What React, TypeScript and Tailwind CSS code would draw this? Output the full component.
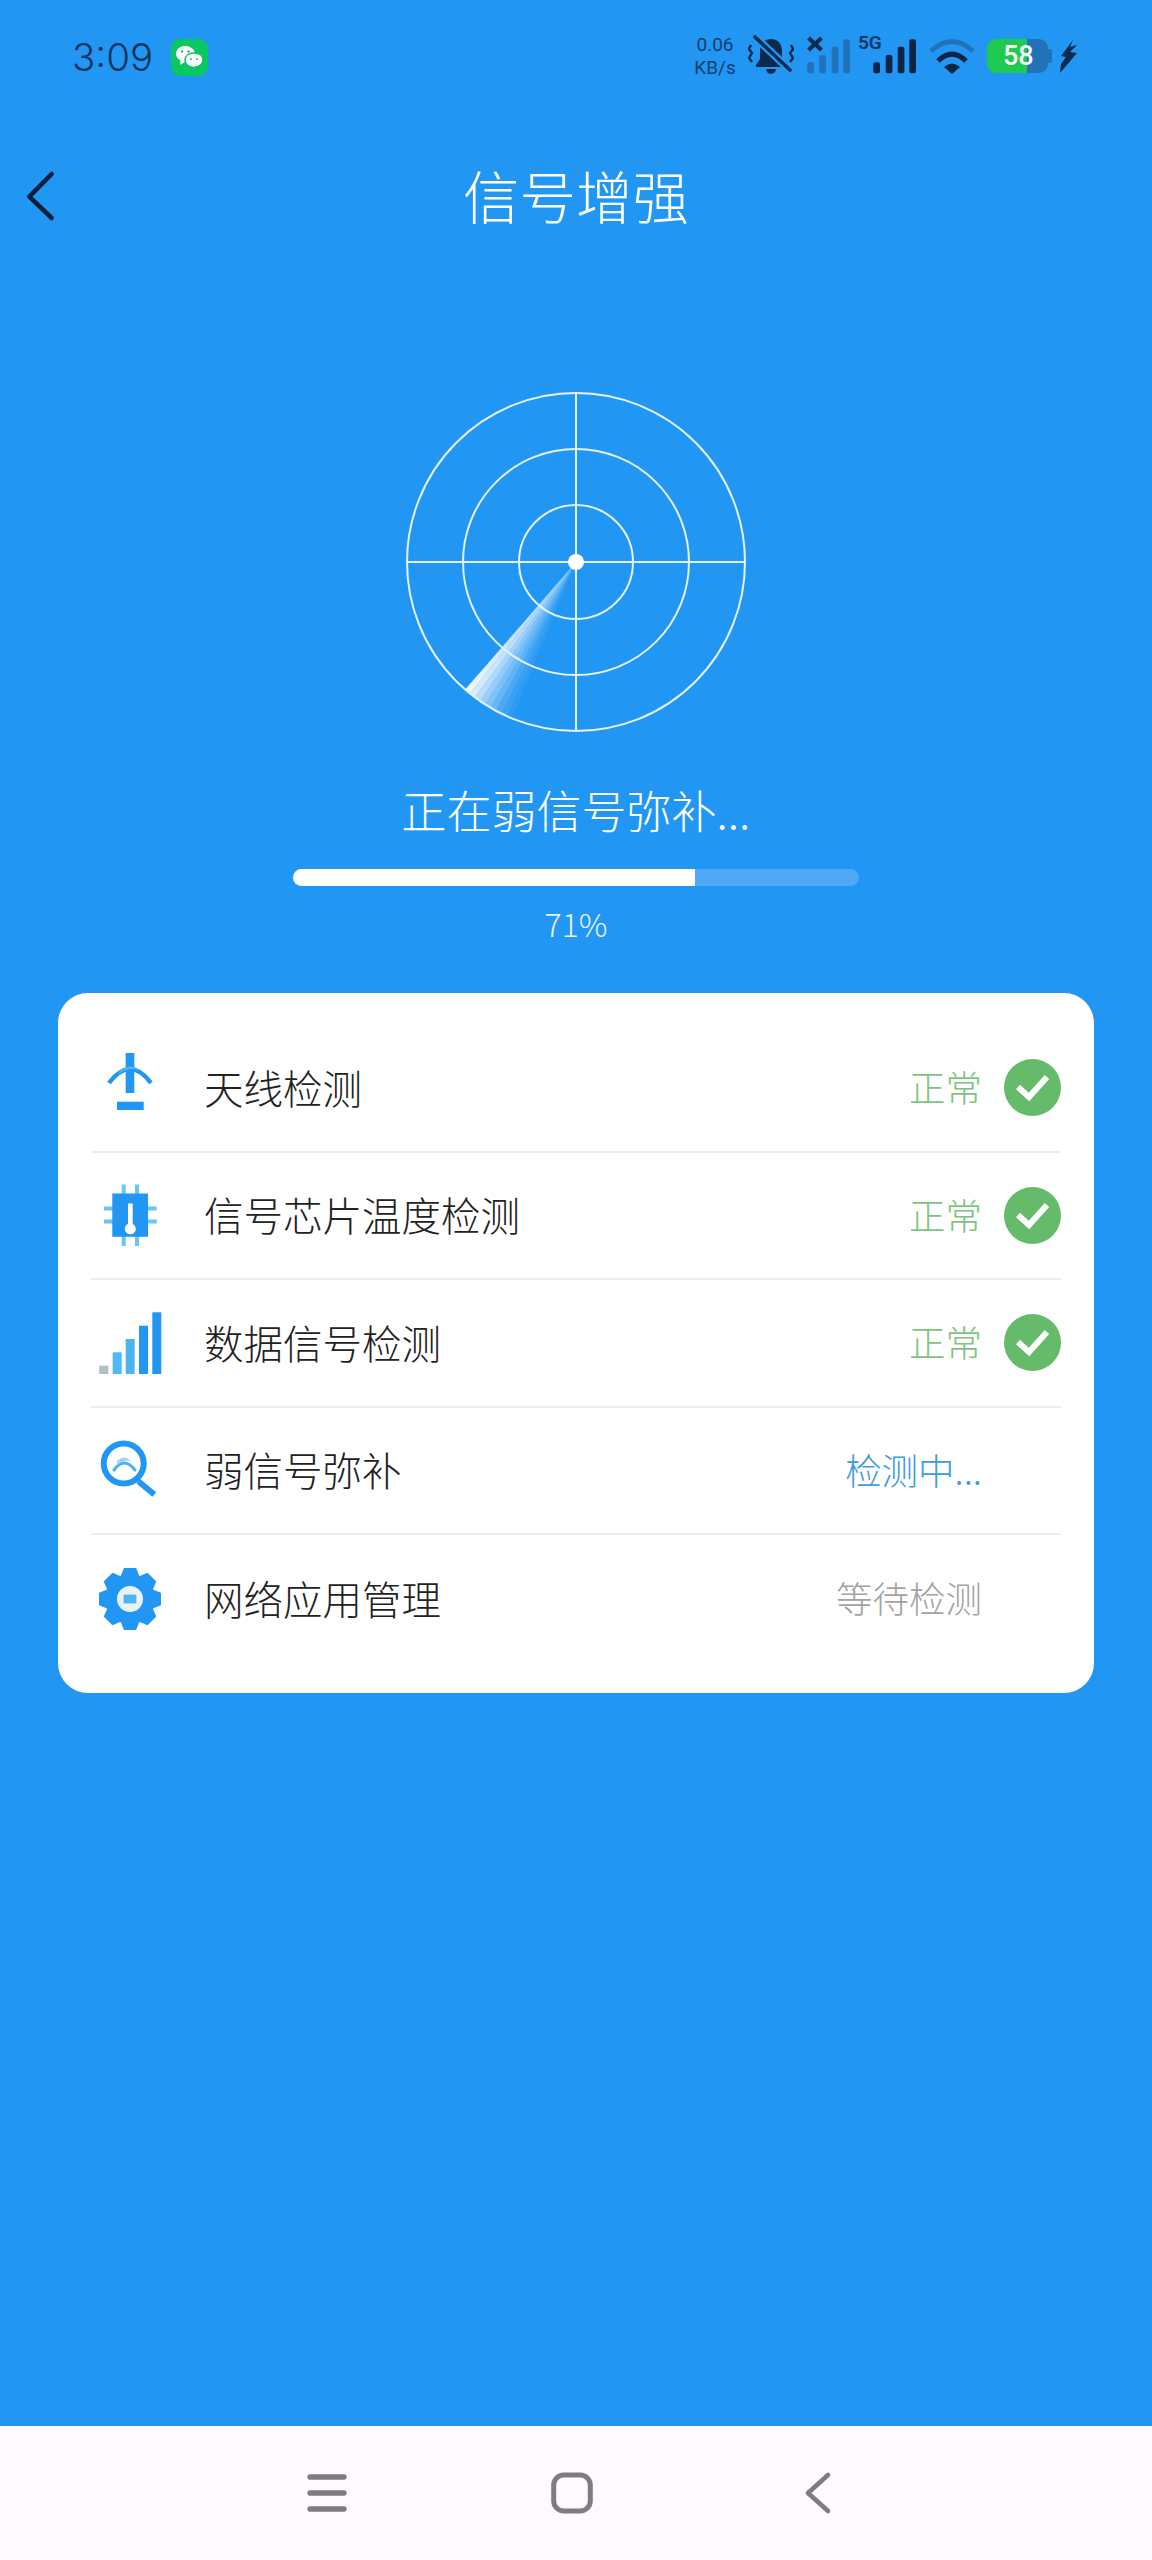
import React from 'react';

const polar = (r: number, deg: number) => {
    const a = (deg * Math.PI) / 180;
    return [172 - r * Math.sin(a), 172 + r * Math.cos(a)];
};

const wedgeOpacity = [0.92, 0.84, 0.7, 0.56, 0.44, 0.32, 0.2, 0.12, 0.06];

const Radar = () => (
    <svg width="344" height="344" viewBox="0 0 344 344" className="mt-[112px]">
        <defs>
            <radialGradient id="sweepFade" gradientUnits="userSpaceOnUse" cx="172" cy="172" r="169">
                <stop offset="0" stopColor="#ffffff" stopOpacity="0.55" />
                <stop offset="1" stopColor="#ffffff" stopOpacity="1" />
            </radialGradient>
        </defs>
        {wedgeOpacity.map((o, i) => {
            const [x1, y1] = polar(169, 41 - i * 2.1);
            const [x2, y2] = polar(169, 41 - (i + 1) * 2.1);
            return (
                <path
                    key={i}
                    d={`M172 172 L${x1} ${y1} A169 169 0 0 0 ${x2} ${y2} Z`}
                    fill="url(#sweepFade)"
                    opacity={o}
                />
            );
        })}
        <g fill="none" stroke="#e3f2fd" strokeWidth="2">
            <circle cx="172" cy="172" r="169" />
            <circle cx="172" cy="172" r="113" />
            <circle cx="172" cy="172" r="57" />
            <path d="M3 172H341M172 3V341" />
        </g>
        <circle cx="172" cy="172" r="8" fill="#fff" />
    </svg>
);

const AntennaIcon = () => (
    <svg width="78" height="78" viewBox="0 0 78 78">
        <path d="M18 34 Q39 6 60 34" fill="none" stroke="#2196f3" strokeWidth="4.5" />
        <rect x="34.7" y="4" width="8.6" height="40" fill="#2196f3" />
        <path d="M28 22 Q39 13 50 22 Q39 17 28 25 Z" fill="#4fb3f5" />
        <rect x="26" y="52.7" width="26.7" height="8.3" fill="#2196f3" />
    </svg>
);

const ChipIcon = () => (
    <svg width="78" height="78" viewBox="0 0 78 78">
        <path d="M32.7 8.5V70M46 8.5V70M13 32.5H65.7M13 45.5H65.7" stroke="#6cc4f2" strokeWidth="4" />
        <rect x="21.3" y="17.5" width="35.7" height="43.3" fill="#2196f3" />
        <rect x="37" y="27.5" width="4.7" height="25" fill="#fff" />
        <circle cx="39.3" cy="52.8" r="5.5" fill="#fff" />
    </svg>
);

const BarsIcon = () => (
    <svg width="78" height="78" viewBox="0 0 78 78">
        <rect x="8.3" y="61.7" width="9" height="8.3" fill="#b0bec5" />
        <rect x="21.7" y="48.3" width="9" height="21.7" fill="#4fb8f7" />
        <rect x="34.7" y="35" width="9" height="35" fill="#4fb3f0" />
        <rect x="48" y="21.7" width="9" height="48.3" fill="#2196f3" />
        <rect x="61.3" y="8.3" width="9" height="61.7" fill="#2196f3" />
    </svg>
);

const SearchIcon = () => (
    <svg width="78" height="78" viewBox="0 0 78 78" fill="none">
        <circle cx="32.7" cy="32.5" r="20" stroke="#2196f3" strokeWidth="6" />
        <path d="M47.3 50.2 L63.3 63.5" stroke="#2196f3" strokeWidth="6" />
        <path d="M23 39 Q33 25 44 39" stroke="#4fb3f0" strokeWidth="3.2" strokeLinecap="round" />
        <path d="M26 30 Q33 23 40 30 Q33 28 26 33 Z" fill="#9ad3f7" />
    </svg>
);

const GearIcon = () => (
    <svg width="78" height="78" viewBox="0 0 78 78">
        <g transform="translate(39 39)">
            <circle r="25" fill="#2196f3" />
            {[0, 45, 90, 135, 180, 225, 270, 315].map((deg) => (
                <path
                    key={deg}
                    d="M-5.5 -30 H5.5 L9 -21 H-9 Z"
                    fill="#2196f3"
                    stroke="#2196f3"
                    strokeWidth="2"
                    strokeLinejoin="round"
                    transform={`rotate(${deg})`}
                />
            ))}
            <circle r="13" fill="#e8f4fd" />
            <rect x="-6.4" y="-4.4" width="12.8" height="8.8" fill="#4fb3f0" />
        </g>
    </svg>
);

const CheckBadge = () => (
    <svg width="57" height="57" viewBox="0 0 57 57" className="ml-[22px]">
        <circle cx="28.5" cy="28.5" r="28.5" fill="#66bb6a" />
        <path d="M14 28 L25 38 L43 18" fill="none" stroke="#fff" strokeWidth="6" />
    </svg>
);

const MutedBell = () => (
    <svg width="46" height="40" viewBox="0 0 46 40" className="ml-[8px]">
        <path d="M23 4c-7 0-11 5-11 12v8l-4 6v2h30v-2l-4-6v-8c0-7-4-12-11-12z" fill="#0c2a4e" />
        <path d="M18 34a5 5 0 0 0 10 0z" fill="#0c2a4e" />
        <path d="M3 10 L0.8 14 L4 18 L1 23 L4 27 M43 10 L45.2 14 L42 18 L45 23 L42 27" fill="none" stroke="#0c2a4e" strokeWidth="2.4" />
        <path d="M5 0 L44 37" stroke="#2196f3" strokeWidth="8" />
        <path d="M7 2 L42 35" stroke="#0c2a4e" strokeWidth="3.6" strokeLinecap="round" />
    </svg>
);

const barTops = [27.3, 20, 11.7, 4.3];

const NoSimSignal = () => (
    <svg width="43" height="40" viewBox="0 0 43 40" className="ml-[13px]">
        {[0.3, 12.3, 24.7, 36.3].map((x, i) => (
            <rect key={x} x={x} y={barTops[i]} width="6.7" height={38.3 - barTops[i]} rx="2" fill="#2272ba" />
        ))}
        <path d="M1.5 3 L14.5 15 M14.5 3 L1.5 15" stroke="#0c2a4e" strokeWidth="4" />
    </svg>
);

const FiveGSignal = () => (
    <div className="relative ml-[8px] h-[40px] w-[59px]">
        <span className="absolute left-0 top-[-3px] text-[19px] leading-[22px] font-semibold text-[#0c3560] font-['Roboto',sans-serif]">
            5G
        </span>
        <svg width="59" height="40" viewBox="0 0 59 40">
            {[15.3, 27.7, 39.7, 51.3].map((x, i) => (
                <rect key={x} x={x} y={barTops[i]} width="6.7" height={38.3 - barTops[i]} rx="2" fill="#0b2545" />
            ))}
        </svg>
    </div>
);

const WifiIcon = () => (
    <svg width="46" height="40" viewBox="0 0 46 40" className="ml-[12px]">
        <path d="M2 16 Q23 -3 44 16" fill="none" stroke="#2272ba" strokeWidth="4.6" />
        <path d="M9 26 Q23 12 37 26" fill="none" stroke="#0b2545" strokeWidth="5" />
        <path d="M15 32 Q23 25 31 32 L23 39 Z" fill="#0b2545" />
    </svg>
);

const Battery = () => (
    <div className="relative ml-[12px] mt-[4px] flex h-[34px] w-[66px] items-center">
        <div className="h-[34px] w-[40px] rounded-l-[9px] bg-[#20c94f]" />
        <div className="h-[34px] w-[21px] rounded-r-[9px] bg-[#2272ba]" />
        <div className="h-[14px] w-[4px] rounded-r-[2px] bg-[#2272ba]" />
        <span className="absolute left-[16px] top-[-1px] text-[27px] leading-[36px] font-medium text-white font-['Roboto',sans-serif]">
            58
        </span>
    </div>
);

const ChargeBolt = () => (
    <svg width="17" height="33" viewBox="0 0 17 33" className="ml-[7px] mt-[5px]">
        <path d="M13 0 L1 16 L6 17 L1 24 L0 33 L17 13 L10 12 L17 5 L10 7 Z" fill="#0c2a4e" />
    </svg>
);

const WeChatBadge = () => (
    <svg width="37" height="37" viewBox="0 0 37 37" className="ml-[19px] mt-[4px]">
        <rect width="37" height="37" rx="9" fill="#0ac763" />
        <path d="M5 15 C5 10 9 7 14 7 C19 7 24 10 24 15 C24 20 19 23 14 23 L9 26 L9.5 21.5 C7 20 5 18 5 15 Z" fill="#fff" />
        <path d="M14 21 C14 16.5 18 14 23 14 C28 14 32 16.5 32 21 C32 25 28 28 24.5 28 L27 31 L21 28 C17 27.5 14 25 14 21 Z" fill="#fff" stroke="#0ac763" strokeWidth="1.5" />
        <circle cx="11" cy="12.5" r="1.2" fill="#0ac763" />
        <circle cx="17.5" cy="12.5" r="1.2" fill="#0ac763" />
        <circle cx="20" cy="20" r="1" fill="#0ac763" />
        <circle cx="26" cy="20" r="1" fill="#0ac763" />
    </svg>
);

const rows = [
    { icon: <AntennaIcon />, label: '天线检测', status: '正常', color: 'text-[#7cc47f]', done: true },
    { icon: <ChipIcon />, label: '信号芯片温度检测', status: '正常', color: 'text-[#7cc47f]', done: true },
    { icon: <BarsIcon />, label: '数据信号检测', status: '正常', color: 'text-[#7cc47f]', done: true },
    { icon: <SearchIcon />, label: '弱信号弥补', status: '检测中...', color: 'text-[#3d9be0]', done: false },
    { icon: <GearIcon />, label: '网络应用管理', status: '等待检测', color: 'text-[#a3a3a3]', done: false },
];

const App = () => {
    return (
        <div className="flex h-[2560px] w-[1152px] flex-col bg-[#2196f3] font-['Noto_Sans_CJK_SC','Noto_Sans',sans-serif]">
            <div className="flex h-[114px] shrink-0 items-start pl-[72px] pr-[75px] pt-[35px]">
                <span className="w-[80px] text-[38.5px] leading-[44px] font-light text-[#0a3360] font-['Inter',sans-serif]">3:09</span>
                <WeChatBadge />
                <div className="flex-1" />
                <div className="-mt-[2px] flex w-[50px] flex-col items-center text-[19px] leading-[23px] text-[#123f6e] font-['Roboto',sans-serif]">
                    <span>0.06</span>
                    <span>KB/s</span>
                </div>
                <MutedBell />
                <NoSimSignal />
                <FiveGSignal />
                <WifiIcon />
                <Battery />
                <ChargeBolt />
            </div>

            <div className="grid h-[164px] shrink-0 grid-cols-[1fr_auto_1fr] items-center">
                <svg width="80" height="60" viewBox="0 0 80 60">
                    <path d="M51.7 8 L29.3 30.7 L51.7 52" fill="none" stroke="#0b1e3c" strokeWidth="4.5" strokeLinecap="round" strokeLinejoin="round" />
                </svg>
                <h1 className="-mt-[4px] text-[56.5px] leading-[70px] font-light text-white">信号增强</h1>
            </div>

            <div className="flex flex-col items-center">
                <Radar />
                <p className="mt-[46px] h-[60px] text-[45px] leading-[60px] font-light text-white">正在弱信号弥补...</p>
                <div className="mt-[29px] h-[17px] w-[566px] overflow-hidden rounded-full bg-[#4fa9f7]">
                    <div className="h-full w-[402px] bg-white" />
                </div>
                <p className="mt-[17px] h-[40px] text-[32px] leading-[40px] font-light text-[#e6f3fe]">71%</p>
            </div>

            <div className="mx-[58px] mt-[50px] h-[700px] rounded-[30px] bg-white px-[33px] pt-[32px]">
                {rows.map((row, i) => (
                    <div
                        key={row.label}
                        className={`flex h-[127.5px] items-center ${i < rows.length - 1 ? 'border-b-2 border-[#eeeeee]' : ''}`}
                    >
                        {row.icon}
                        <span className="ml-[35px] flex-1 pb-[3px] text-[39.5px] font-light text-[#222222]">{row.label}</span>
                        <span className={`text-[36.5px] font-light ${row.color}`}>{row.status}</span>
                        {row.done ? <CheckBadge /> : <div className="w-[79px]" />}
                    </div>
                ))}
            </div>

            <div className="flex-1" />

            <div className="flex h-[134px] shrink-0 items-center justify-center gap-[185px] bg-[#fef8ff] pr-[8px]">
                <svg width="60" height="60" viewBox="0 0 60 60" fill="none" stroke="#7d7c81" strokeWidth="5.3" strokeLinecap="round">
                    <path d="M13 14 H47 M13 30 H47 M13 46 H47" />
                </svg>
                <svg width="60" height="60" viewBox="0 0 60 60" fill="none" stroke="#7d7c81" strokeWidth="5">
                    <rect x="11.7" y="12" width="36.6" height="36" rx="10" />
                </svg>
                <svg width="60" height="60" viewBox="0 0 60 60" fill="none" stroke="#7d7c81" strokeWidth="4.6" strokeLinecap="round" strokeLinejoin="round">
                    <path d="M41 12 L21 30 L41 48" />
                </svg>
            </div>
        </div>
    );
};

export default App;
